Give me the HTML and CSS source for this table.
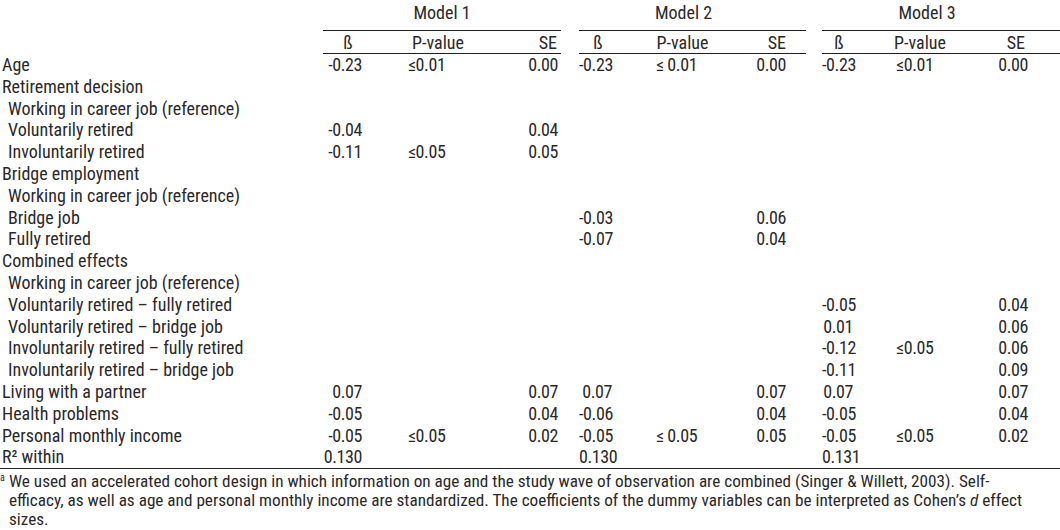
FILE: index.html
```html
<!DOCTYPE html>
<html lang="en">
<head>
<meta charset="utf-8">
<title>Regression table</title>
<link rel="stylesheet" href="styles.css">
</head>
<body>
<table class="tbl">
  <colgroup>
    <col class="c-label">
    <col class="c1b"><col class="c1p"><col class="c1s">
    <col class="gap1">
    <col class="c2b"><col class="c2p"><col class="c2s">
    <col class="gap2">
    <col class="c3b"><col class="c3p"><col class="c3s">
  </colgroup>
  <thead>
    <tr class="hrow1">
      <th></th>
      <th colspan="3" class="model">Model 1</th>
      <th></th>
      <th colspan="3" class="model model2">Model 2</th>
      <th></th>
      <th colspan="3" class="model model3">Model 3</th>
    </tr>
    <tr class="hrow2">
      <th></th>
      <th class="sub m1b">ß</th><th class="sub m1p">P-value</th><th class="sub m1s">SE</th>
      <th></th>
      <th class="sub m2b">ß</th><th class="sub m2p">P-value</th><th class="sub m2s">SE</th>
      <th></th>
      <th class="sub m3b">ß</th><th class="sub m3p">P-value</th><th class="sub m3s">SE</th>
    </tr>
  </thead>
  <tbody>
    <tr><td class="lbl">Age</td><td class="v1b">-0.23</td><td class="v1p">≤0.01</td><td class="v1s">0.00</td><td></td><td class="v2b">-0.23</td><td class="v2p">≤ 0.01</td><td class="v2s">0.00</td><td></td><td class="v3b">-0.23</td><td class="v3p">≤0.01</td><td class="v3s">0.00</td></tr>
    <tr><td class="lbl">Retirement decision</td><td colspan="11"></td></tr>
    <tr><td class="lbl ind">Working in career job (reference)</td><td colspan="11"></td></tr>
    <tr><td class="lbl ind">Voluntarily retired</td><td class="v1b">-0.04</td><td class="v1p"></td><td class="v1s">0.04</td><td colspan="8"></td></tr>
    <tr><td class="lbl ind">Involuntarily retired</td><td class="v1b">-0.11</td><td class="v1p">≤0.05</td><td class="v1s">0.05</td><td colspan="8"></td></tr>
    <tr><td class="lbl">Bridge employment</td><td colspan="11"></td></tr>
    <tr><td class="lbl ind">Working in career job (reference)</td><td colspan="11"></td></tr>
    <tr><td class="lbl ind">Bridge job</td><td colspan="4"></td><td class="v2b">-0.03</td><td class="v2p"></td><td class="v2s">0.06</td><td colspan="4"></td></tr>
    <tr><td class="lbl ind">Fully retired</td><td colspan="4"></td><td class="v2b">-0.07</td><td class="v2p"></td><td class="v2s">0.04</td><td colspan="4"></td></tr>
    <tr><td class="lbl">Combined effects</td><td colspan="11"></td></tr>
    <tr><td class="lbl ind">Working in career job (reference)</td><td colspan="11"></td></tr>
    <tr><td class="lbl ind">Voluntarily retired – fully retired</td><td colspan="8"></td><td class="v3b">-0.05</td><td class="v3p"></td><td class="v3s">0.04</td></tr>
    <tr><td class="lbl ind">Voluntarily retired – bridge job</td><td colspan="8"></td><td class="v3b">0.01</td><td class="v3p"></td><td class="v3s">0.06</td></tr>
    <tr><td class="lbl ind">Involuntarily retired – fully retired</td><td colspan="8"></td><td class="v3b">-0.12</td><td class="v3p">≤0.05</td><td class="v3s">0.06</td></tr>
    <tr><td class="lbl ind">Involuntarily retired – bridge job</td><td colspan="8"></td><td class="v3b">-0.11</td><td class="v3p"></td><td class="v3s">0.09</td></tr>
    <tr><td class="lbl">Living with a partner</td><td class="v1b">0.07</td><td class="v1p"></td><td class="v1s">0.07</td><td></td><td class="v2b">0.07</td><td class="v2p"></td><td class="v2s">0.07</td><td></td><td class="v3b">0.07</td><td class="v3p"></td><td class="v3s">0.07</td></tr>
    <tr><td class="lbl">Health problems</td><td class="v1b">-0.05</td><td class="v1p"></td><td class="v1s">0.04</td><td></td><td class="v2b">-0.06</td><td class="v2p"></td><td class="v2s">0.04</td><td></td><td class="v3b">-0.05</td><td class="v3p"></td><td class="v3s">0.04</td></tr>
    <tr><td class="lbl">Personal monthly income</td><td class="v1b">-0.05</td><td class="v1p">≤0.05</td><td class="v1s">0.02</td><td></td><td class="v2b">-0.05</td><td class="v2p">≤ 0.05</td><td class="v2s">0.05</td><td></td><td class="v3b">-0.05</td><td class="v3p">≤0.05</td><td class="v3s">0.02</td></tr>
    <tr class="last"><td class="lbl">R² within</td><td class="v1b">0.130</td><td class="v1p"></td><td class="v1s"></td><td></td><td class="v2b">0.130</td><td class="v2p"></td><td class="v2s"></td><td></td><td class="v3b">0.131</td><td class="v3p"></td><td class="v3s"></td></tr>
  </tbody>
</table>
<p class="note"><sup class="mark">a</sup>We used an accelerated cohort design in which information on age and the study wave of observation are combined (Singer &amp; Willett, 2003). Self-<br>efficacy, as well as age and personal monthly income are standardized. The coefficients of the dummy variables can be interpreted as Cohen’s <i>d</i> effect<br>sizes.</p>
</body>
</html>
```

FILE: styles.css
```css
html, body {
  margin: 0;
  padding: 0;
  background: #ffffff;
}

body {
  width: 1060px;
  height: 530px;
  overflow: hidden;
  color: #2b2829;
  font-family: "Roboto Condensed", "Liberation Sans", sans-serif;
  font-size: 18px;
}

.tbl {
  width: 1060px;
  border-collapse: collapse;
  table-layout: fixed;
}

.c-label { width: 323px; }
.c1b { width: 50px; }
.c1p { width: 130px; }
.c1s { width: 58px; }
.gap1 { width: 18px; }
.c2b { width: 38px; }
.c2p { width: 131px; }
.c2s { width: 58px; }
.gap2 { width: 16px; }
.c3b { width: 34px; }
.c3p { width: 128px; }
.c3s { width: 76px; }

th, td {
  padding: 0;
  font-weight: normal;
  white-space: nowrap;
  overflow: visible;
}

.hrow1 th {
  height: 30px;
  line-height: 26px;
  vertical-align: top;
}

.hrow1 .model {
  text-align: center;
  border-bottom: 1px solid #231f20;
}

.hrow1 .model2 { padding-right: 18px; }
.hrow1 .model3 { padding-right: 28px; }

.hrow2 th {
  height: 22px;
  line-height: 20px;
  vertical-align: bottom;
}

.hrow2 .sub {
  border-bottom: 1px solid #231f20;
}

.m1b, .m2b, .m3b, .m1p, .m2p, .m3p { text-align: center; }
.m1s { text-align: right; padding-right: 4px; }
.m2s { text-align: right; padding-right: 20px; }
.m3s { text-align: right; padding-right: 35px; }

tbody td {
  height: 21.8px;
  line-height: 21.8px;
}

.lbl { text-align: left; padding-left: 2px; }
.lbl.ind { padding-left: 8px; }

.v1b, .v1p, .v1s, .v2b, .v2p, .v2s, .v3b, .v3p, .v3s {
  letter-spacing: -0.4px;
}

.v1b { text-align: right; padding-right: 11px; }
.v1p { text-align: left; padding-left: 35px; }
.v1s { text-align: right; padding-right: 3px; }
.v2b { text-align: right; padding-right: 5px; }
.v2p { text-align: left; padding-left: 39px; }
.v2s { text-align: right; padding-right: 20px; }
.v3b { text-align: right; padding-right: 3px; }
.v3p { text-align: left; padding-left: 40px; }
.v3s { text-align: right; padding-right: 32px; }

.last td {
  border-bottom: 1px solid #231f20;
}

.note {
  margin: 3px 0 0;
  padding-left: 9px;
  font-size: 17.2px;
  line-height: 19px;
  white-space: nowrap;
}

.mark {
  font-size: 10px;
  line-height: 0;
  vertical-align: 6px;
  margin-left: -9px;
  display: inline-block;
  width: 9px;
}
```
